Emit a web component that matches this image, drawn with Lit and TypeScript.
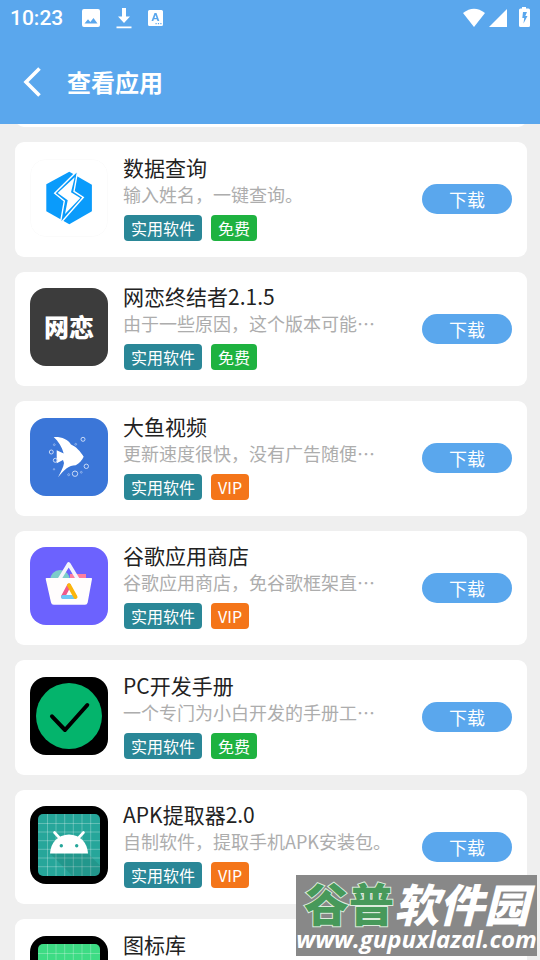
import { LitElement, html, css, svg, TemplateResult } from "lit";
import { customElement, property } from "lit/decorators.js";

interface AppInfo {
  name: string;
  desc?: string;
  tag?: "免费" | "VIP";
  icon: TemplateResult;
}

const tile = (content: unknown) =>
  html`<svg class="icon" viewBox="0 0 78 78" aria-hidden="true">${content}</svg>`;

const boltIcon = tile(svg`
  <rect x=".5" y=".5" width="77" height="77" rx="15" fill="#fff" stroke="#fbfbfb"/>
  <path d="M39.3 12.8 61.9 25.8v26.5L39.3 65.200 16.300 52.300V25.300z" fill="#0a9bfb"/>
  <path d="M47.7 11.500 24.700 34.300l9.600 7.700-4 22.500 23-26.200-9.300-6z" fill="#0a9bfb" stroke="#fff" stroke-width="1.4"/>
  <path d="M44.7 18.3 27.7 34l10 7.3L35 55l15.3-16-9.3-5.7z" fill="#fff"/>`);

const loveIcon = html`<div class="icon word">网恋</div>`;

const fishIcon = tile(svg`
  <rect width="78" height="78" fill="#3b76d8"/>
  <path d="M23.700 19C31 18.500 38 21 41 26.500c5 2 9.500 7 12.700 12.200-1.700 3.500-4 6-8 8.600-7 0-11 4-17.700 12 3-6 5.500-10 6-14.300l-1-3-6.300 3.300V32.300l7 3.200C32 29 28.500 23.500 23.700 19z" fill="#fff"/>
  <g fill="none" stroke="#d5e2f8" stroke-width=".9">
    <circle cx="53" cy="21.300" r="2"/><circle cx="21.300" cy="34" r="2"/><circle cx="25.300" cy="42.300" r="2"/>
    <circle cx="45" cy="55.700" r="2.700"/><circle cx="56.300" cy="48.300" r="2.200"/>
    <g opacity=".6"><circle cx="45.700" cy="26.300" r=".9"/><circle cx="24.300" cy="26.700" r=".9"/>
    <circle cx="24" cy="51.300" r=".7"/><circle cx="38.700" cy="56.700" r="1"/><circle cx="51.300" cy="54.300" r=".9"/></g>
  </g>`);

const basketIcon = tile(svg`
  <rect width="78" height="78" fill="#6c62fe"/>
  <circle cx="30" cy="33" r="10" fill="#7cccc9"/>
  <path d="M40 27h16v5H40z" fill="#fd7e9f"/>
  <path d="M29 33 38.700 17l9.600 16" fill="none" stroke="#f4f4fc" stroke-width="3.600" stroke-linejoin="round"/>
  <path d="M16.500 31h44.700q1 0 .8 1l-4.300 23.500q-.5 2.200-2.700 2.200H23.700q-2.200 0-2.700-2.200L15.700 32q-.2-1 .8-1z" fill="#fffdfd"/>
  <g fill="none" stroke-width="4" stroke-linecap="round" stroke-linejoin="round">
    <path d="M33 49.800 39 38.500" stroke="#ef5b8c"/>
    <path d="M33 50h11" stroke="#6ec8f6"/>
    <path d="M39 38.300 45.500 50" stroke="#fbb50c"/>
  </g>`);

const checkIcon = tile(svg`
  <rect width="78" height="78"/>
  <circle cx="39" cy="39" r="33" fill="#04b46c"/>
  <path d="M22 39.300 35 53l22.300-25" fill="none" stroke="#000" stroke-width="4" stroke-linecap="round" stroke-linejoin="round"/>`);

const androidIcon = (color: string) => tile(svg`
  <rect width="78" height="78"/>
  <rect x="8" y="8" width="62" height="62" rx="5" fill=${color}/>
  <path d="M17.500 8v62M26 8v62M34.700 8v62M43.300 8v62M52 8v62M60.700 8v62M8 17.500h62M8 26h62M8 34.700h62M8 43.300h62M8 52h62M8 60.700h62" stroke="#fff" stroke-opacity=".35" stroke-width=".8"/>
  <path d="M20 47.500h38l12 12V65q0 5-5 5H42.500z" fill="#000" opacity=".09"/>
  <path d="M20 47.500C20.500 37 28 28.500 39 28.500S57.500 37 58 47.500z" fill="#fff"/>
  <path d="M24.500 26.500 31 33.500M53.500 26.500 47 33.500" stroke="#fff" stroke-width="2.600" stroke-linecap="round"/>
  <circle cx="31.300" cy="39.700" r="1.700" fill=${color}/><circle cx="46.700" cy="39.700" r="1.700" fill=${color}/>`);

const apps: AppInfo[] = [
  { name: "数据查询", desc: "输入姓名，一键查询。", tag: "免费", icon: boltIcon },
  { name: "网恋终结者2.1.5", desc: "由于一些原因，这个版本可能…", tag: "免费", icon: loveIcon },
  { name: "大鱼视频", desc: "更新速度很快，没有广告随便…", tag: "VIP", icon: fishIcon },
  { name: "谷歌应用商店", desc: "谷歌应用商店，免谷歌框架直…", tag: "VIP", icon: basketIcon },
  { name: "PC开发手册", desc: "一个专门为小白开发的手册工…", tag: "免费", icon: checkIcon },
  { name: "APK提取器2.0", desc: "自制软件，提取手机APK安装包。", tag: "VIP", icon: androidIcon("#26a69a") },
  { name: "图标库", icon: androidIcon("#3ddc84") },
];

@customElement("status-bar")
export class StatusBar extends LitElement {
  static styles = css`
    :host { display: flex; align-items: center; height: 36px; padding: 0 9px 0 10px; color: #fff; }
    .time { font: 500 21px/36px Roboto, sans-serif; }
    .left { display: flex; align-items: center; gap: 16px; margin-left: 19px; }
    .right { display: flex; align-items: center; gap: 4px; margin-left: auto; }
    .battery { margin-left: 7px; }
    svg { display: block; }
  `;
  render() {
    return html`
      <span class="time">10:23</span>
      <div class="left">
        <svg width="18" height="18" viewBox="0 0 18 18"><path fill="#fff" fill-rule="evenodd" d="M2 0h14q2 0 2 2v14q0 2-2 2H2q-2 0-2-2V2q0-2 2-2zM2.500 14.500h13l-4-5.500-3.200 4-2.300-2.700z"/></svg>
        <svg width="16" height="22" viewBox="0 0 16 22"><path fill="#fff" d="M6 1h4v8.500h4L8 16 2 9.500h4zM.5 19.500h15v1.700H.5z"/></svg>
        <svg width="16" height="18" viewBox="0 0 16 18"><path fill="#fff" fill-rule="evenodd" d="M1.500 1h12Q15 1 15 2.500v13q0 1.500-1.500 1.500h-12Q0 17 0 15.500v-13Q0 1 1.500 1zM6.500 4 3.500 12h1.800l.6-1.700h3l.6 1.700h1.800L8.500 4zm1 2 1 2.900h-2zM7.500 14v1.200h1.200V14zm2.400 0v1.200h1.200V14zm2.400 0v1.200h1.200V14z"/></svg>
      </div>
      <div class="right">
        <svg width="22" height="20" viewBox="0 0 22 20"><path fill="#fff" d="M0 5Q11-3.500 22 5L11 19z"/></svg>
        <svg width="18" height="20" viewBox="0 0 18 20"><path fill="#fff" d="M18 1v18H0z"/></svg>
        <svg class="battery" width="13" height="22" viewBox="0 1 13 22"><path fill="#fff" fill-rule="evenodd" d="M4 1h4v1.500h2.500Q12 2.500 12 4v15.500q0 1.500-1.500 1.500h-8Q1 21 1 19.500V4q0-1.500 1.500-1.500H4zM5 6 4.300 12h1.900L5.500 17.500 9.500 10H7.300L9 6z"/></svg>
      </div>`;
  }
}

@customElement("app-card")
export class AppCard extends LitElement {
  @property({ attribute: false }) app!: AppInfo;
  static styles = css`
    :host {
      display: flex; align-items: center; box-sizing: border-box; height: 100%;
      padding: 0 15px 4px; border-radius: 9px; background: #fff;
    }
    .icon { display: block; flex: none; width: 78px; height: 78px; border-radius: 16px; overflow: hidden; }
    .word {
      display: flex; align-items: center; justify-content: center; box-sizing: border-box; padding-bottom: 2px;
      background: #3c3c3c; color: #fff; font-size: 25px; font-weight: 900; line-height: 36px;
    }
    .info { flex: 1; min-width: 0; height: 90px; margin-left: 15px; }
    .name, .desc { margin: 0; font-weight: 400; white-space: nowrap; }
    .name { font-size: 21px; line-height: 28px; color: #222; }
    .desc { font-size: 18px; line-height: 26px; color: #adadad; overflow: hidden; text-overflow: ellipsis; }
    .tags { display: flex; gap: 9px; margin: 8px 0 0 1px; }
    .tag { padding: 0 7px; border-radius: 4px; font-size: 16px; line-height: 26px; color: #fff; background: #2a8797; }
    .free { background: #1eb240; }
    .vip { background: #f47519; }
    .get {
      flex: none; width: 90px; height: 30px; margin: 3px 0 0; padding: 0; border: 0; border-radius: 15px;
      background: #5aa7ed; color: #fff; font: inherit; font-size: 18px; line-height: 28px;
    }
  `;
  render() {
    const { name, desc, tag, icon } = this.app;
    return html`
      ${icon}
      <div class="info">
        <h2 class="name">${name}</h2>
        ${desc ? html`
          <p class="desc">${desc}</p>
          <div class="tags">
            <span class="tag">实用软件</span>
            <span class="tag ${tag === "VIP" ? "vip" : "free"}">${tag}</span>
          </div>` : null}
      </div>
      ${desc ? html`<button class="get" type="button">下载</button>` : null}`;
  }
}

@customElement("app-root")
export class AppRoot extends LitElement {
  static styles = css`
    :host {
      display: flex; flex-direction: column; height: 100vh; overflow: hidden; background: #efefef;
      font-family: "Noto Sans CJK SC", sans-serif;
    }
    .top { flex: none; background: #5aa7ed; }
    .bar { display: flex; align-items: center; gap: 23px; height: 88px; padding: 3px 0 0 22px; color: #fff; box-sizing: border-box; }
    .back { display: block; width: 22px; height: 32px; padding: 0; border: 0; background: none; }
    .back svg { display: block; }
    .title { margin: 0; font-size: 24px; font-weight: 700; line-height: 36px; }
    .scroll { flex: 1; min-height: 0; overflow-y: auto; scrollbar-width: none; padding: 0 13px 0 15px; }
    .previous { display: flex; align-items: flex-end; height: 3px; overflow: hidden; }
    .previous-card { flex: 1; height: 24px; border-radius: 9px; background: #fff; }
    .list { display: grid; grid-auto-rows: 115px 114px; gap: 15px; margin: 15px 0; padding: 0; list-style: none; }
    .mark {
      position: absolute; right: 3px; bottom: 4px; width: 241px; height: 81px; box-sizing: border-box;
      padding-top: 4px; background: #888; color: #fff; text-align: center; white-space: nowrap;
    }
    .brand { font-size: 45px; font-weight: 900; line-height: 48px; }
    .green { color: #47995a; -webkit-text-stroke: 2px #dcebdc; paint-order: stroke fill; }
    .slant { font-style: italic; }
    .site { font: italic 700 24px/24px "Open Sans", sans-serif; }
  `;
  render() {
    return html`
      <header class="top">
        <status-bar></status-bar>
        <div class="bar">
          <button class="back" type="button" aria-label="返回">
            <svg width="22" height="32" viewBox="0 0 22 32"><path d="M17.500 2.500 4 16l13.500 13.500" fill="none" stroke="#fff" stroke-width="3.600"/></svg>
          </button>
          <h1 class="title">查看应用</h1>
        </div>
      </header>
      <main class="scroll">
        <div class="previous"><div class="previous-card"></div></div>
        <ul class="list">
          ${apps.map((app) => html`<li><app-card .app=${app}></app-card></li>`)}
        </ul>
      </main>
      <aside class="mark">
        <div class="brand"><span class="green">谷普</span><span class="slant">软件园</span></div>
        <div class="site">www.gupuxlazal.com</div>
      </aside>`;
  }
}
